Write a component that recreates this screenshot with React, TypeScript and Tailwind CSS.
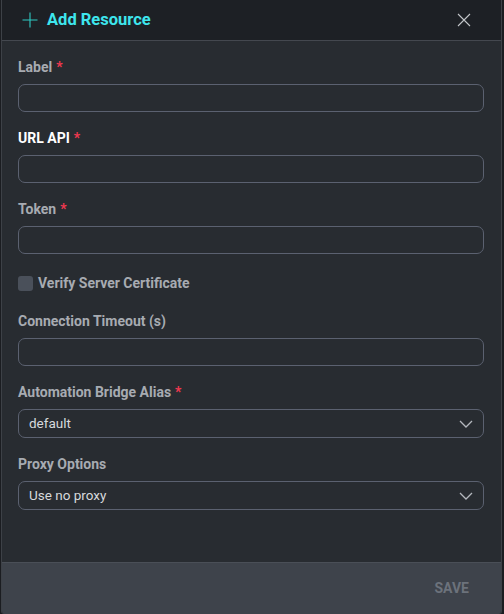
import React from 'react';

const font = { fontFamily: 'Roboto, "Liberation Sans", sans-serif' };

function Required() {
  return <span className="ml-1 text-[#f0384f]">*</span>;
}

function Chevron() {
  return (
    <svg width="14" height="8" viewBox="0 0 14 8" fill="none" className="text-[#b4b8be]">
      <path d="M1 1l6 6 6-6" stroke="currentColor" strokeWidth="1.3" />
    </svg>
  );
}

interface FieldProps {
  label: string;
  required?: boolean;
  active?: boolean;
  value?: string;
  select?: boolean;
}

function Field({ label, required, active, value, select }: FieldProps) {
  return (
    <div className="mb-[18px] flex flex-col">
      <label
        className={
          'h-4 text-[14px] leading-4 font-bold ' +
          (active ? 'text-white' : 'text-[#a7abb1]')
        }
      >
        {label}
        {required && <Required />}
      </label>
      <div
        className={
          'mt-[9px] flex items-center justify-between rounded-[7px] border border-[#5b6170] pl-[10px] pr-[10px] ' +
          (select ? 'h-[29px]' : 'h-[28px]')
        }
      >
        <span className="text-[13.5px] text-[#d6d9dc]">{value}</span>
        {select && <Chevron />}
      </div>
    </div>
  );
}

export default function App() {
  return (
    <div className="flex h-[614px] w-[504px] bg-[#1b1d21]" style={font}>
      <div className="ml-px flex h-full w-[501px] flex-col overflow-hidden rounded-b-[3px] border-x border-[#3d4147]">
        {/* Header */}
        <div className="flex h-[41px] items-center justify-between border-b border-[#44484f] bg-[#1d2025] pl-5 pr-[30px]">
          <div className="flex items-center gap-[9px]">
            <svg width="16" height="16" viewBox="0 0 16 16" fill="none" className="text-[#2fc9c4]">
              <path d="M8 0.5v15M0.5 8h15" stroke="currentColor" strokeWidth="1.1" />
            </svg>
            <span className="text-[16.5px] font-bold text-[#3ee6ee]">Add Resource</span>
          </div>
          <svg width="14" height="14" viewBox="0 0 14 14" fill="none" className="text-[#c3c6ca]">
            <path d="M1 1l12 12M13 1L1 13" stroke="currentColor" strokeWidth="1.1" />
          </svg>
        </div>

        {/* Body */}
        <div className="flex flex-1 flex-col bg-[#282c31] pl-4 pr-[17px] pt-[18px]">
          <Field label="Label" required />
          <Field label="URL API" required active />
          <Field label="Token" required />

          <div className="mb-[22px] mt-[3px] flex h-4 items-center gap-[5px]">
            <span className="h-[15px] w-[15px] rounded-[3px] bg-[#4a505a]" />
            <span className="text-[14px] font-bold text-[#a7abb1]">Verify Server Certificate</span>
          </div>

          <Field label="Connection Timeout (s)" />
          <Field label="Automation Bridge Alias" required value="default" select />
          <Field label="Proxy Options" value="Use no proxy" select />
        </div>

        {/* Footer */}
        <div className="flex h-[52px] items-center justify-end border-t border-[#4a4f57] bg-[#3e434b] pr-8">
          <span className="text-[14px] font-bold text-[#6c727b]">SAVE</span>
        </div>
      </div>
    </div>
  );
}
